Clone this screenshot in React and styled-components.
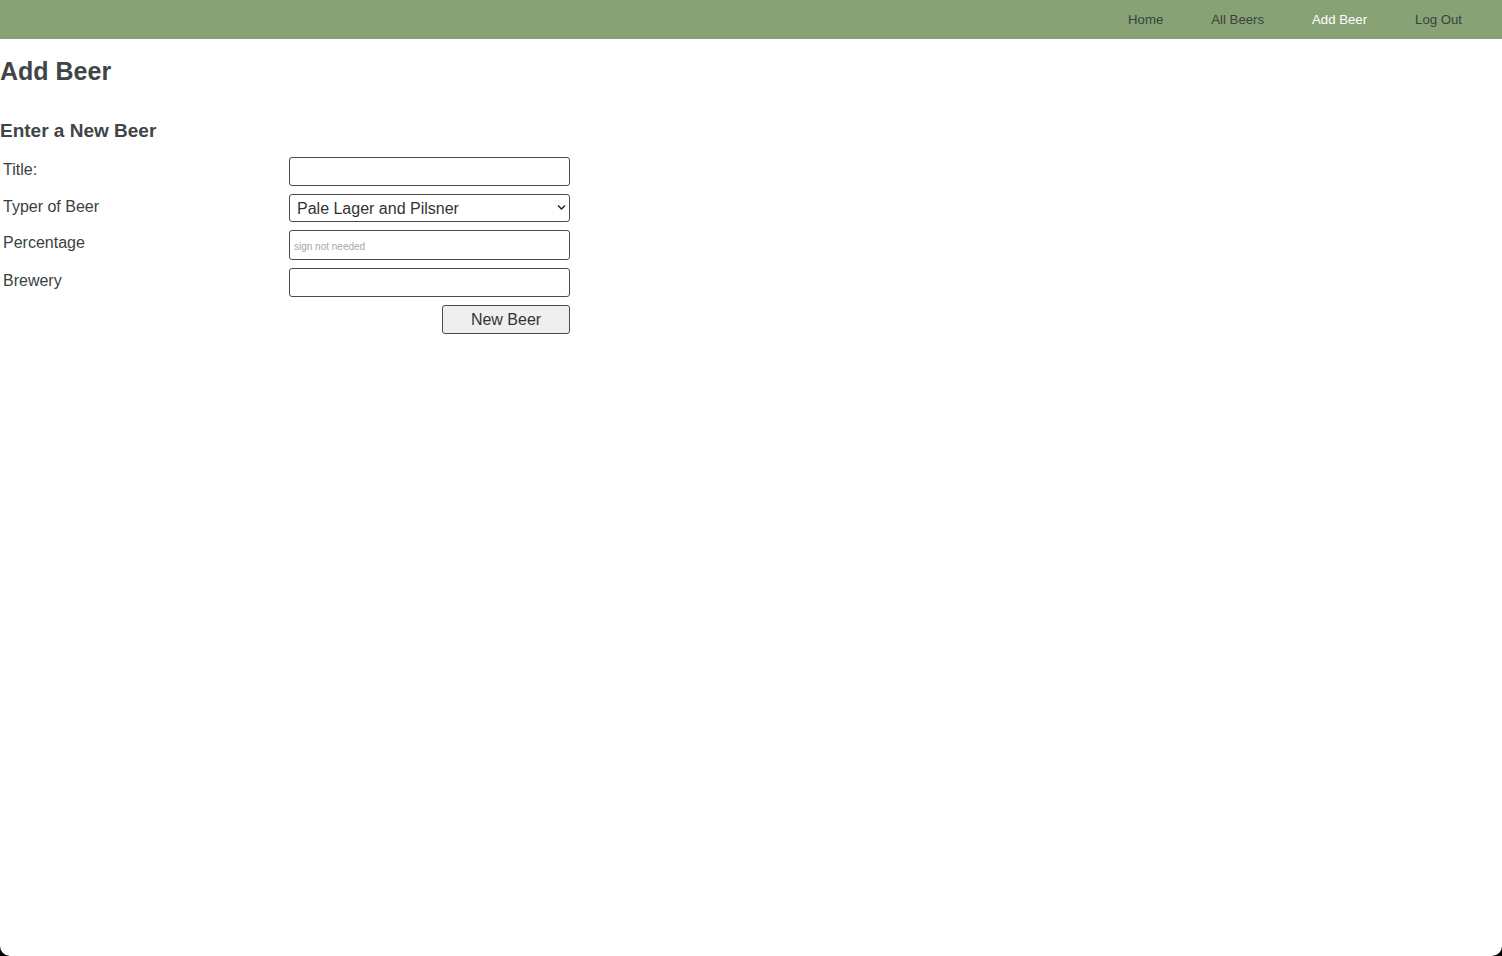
import React from "react";
import styled, { createGlobalStyle } from "styled-components";

const GlobalStyle = createGlobalStyle`
  html {
    background: #000;
  }
  body {
    margin: 0;
    min-height: 100vh;
    background: #fff;
    border-radius: 0 0 10px 10px;
    overflow: hidden;
    font-family: "Liberation Sans", Arial, sans-serif;
    color: #404547;
  }
`;

const NavBar = styled.nav`
  height: 39px;
  background: #87a275;
  display: flex;
  align-items: center;
  justify-content: flex-end;
  gap: 48px;
  padding-right: 40px;
`;

const NavLink = styled.a`
  font-size: 13.2px;
  color: ${(p) => (p.$active ? "#ffffff" : "#3a4040")};
  text-decoration: none;
  cursor: pointer;
`;

const PageTitle = styled.h1`
  font-size: 25px;
  font-weight: bold;
  margin: 18px 0 0;
  line-height: normal;
`;

const FormTitle = styled.h2`
  font-size: 19px;
  font-weight: bold;
  margin: 34px 0 15px;
  line-height: normal;
`;

const Form = styled.form`
  display: grid;
  grid-template-columns: 289px 281px;
  row-gap: 8px;
`;

const Label = styled.label`
  font-size: 16px;
  color: #3a3f42;
  padding: 4px 0 0 3px;
`;

const TextInput = styled.input`
  box-sizing: border-box;
  width: 281px;
  height: ${(p) => p.$h || 29}px;
  border: 1px solid #4a4a4a;
  border-radius: 3px;
  padding: 0 4px;
  font-family: "Liberation Sans", Arial, sans-serif;
  font-size: 16px;
  outline: none;
  &::placeholder {
    font-size: 10px;
    color: #a3aaa6;
  }
`;

const SelectWrap = styled.div`
  position: relative;
  width: 281px;
  height: 28px;
`;

const Select = styled.select`
  appearance: none;
  box-sizing: border-box;
  width: 100%;
  height: 100%;
  border: 1px solid #4a4a4a;
  border-radius: 3px;
  background: #fff;
  padding: 0 0 0 7px;
  font-family: "Liberation Sans", Arial, sans-serif;
  font-size: 16px;
  color: #333;
  outline: none;
`;

const Chevron = styled.svg`
  position: absolute;
  right: 4px;
  top: 10px;
  pointer-events: none;
`;

const ButtonCell = styled.div`
  grid-column: 2;
  display: flex;
  justify-content: flex-end;
`;

const SubmitButton = styled.button`
  box-sizing: border-box;
  width: 128px;
  height: 29px;
  background: #efefef;
  border: 1px solid #4a4a4a;
  border-radius: 3px;
  font-family: "Liberation Sans", Arial, sans-serif;
  font-size: 16px;
  color: #333;
  cursor: pointer;
`;

const links = [
  { label: "Home" },
  { label: "All Beers" },
  { label: "Add Beer", active: true },
  { label: "Log Out" },
];

export default function App() {
  return (
    <>
      <GlobalStyle />
      <NavBar>
        {links.map((l) => (
          <NavLink key={l.label} $active={l.active}>
            {l.label}
          </NavLink>
        ))}
      </NavBar>
      <PageTitle>Add Beer</PageTitle>
      <FormTitle>Enter a New Beer</FormTitle>
      <Form onSubmit={(e) => e.preventDefault()}>
        <Label>Title:</Label>
        <TextInput type="text" />
        <Label>Typer of Beer</Label>
        <SelectWrap>
          <Select defaultValue="pale">
            <option value="pale">Pale Lager and Pilsner</option>
            <option value="ipa">India Pale Ale</option>
            <option value="stout">Stout</option>
            <option value="wheat">Wheat Beer</option>
          </Select>
          <Chevron width="9" height="7" viewBox="0 0 9 7">
            <path d="M1 1.5 L4.5 5 L8 1.5" fill="none" stroke="#222" strokeWidth="1.5" />
          </Chevron>
        </SelectWrap>
        <Label>Percentage</Label>
        <TextInput type="text" placeholder="sign not needed" $h={30} />
        <Label>Brewery</Label>
        <TextInput type="text" />
        <ButtonCell>
          <SubmitButton type="submit">New Beer</SubmitButton>
        </ButtonCell>
      </Form>
    </>
  );
}
